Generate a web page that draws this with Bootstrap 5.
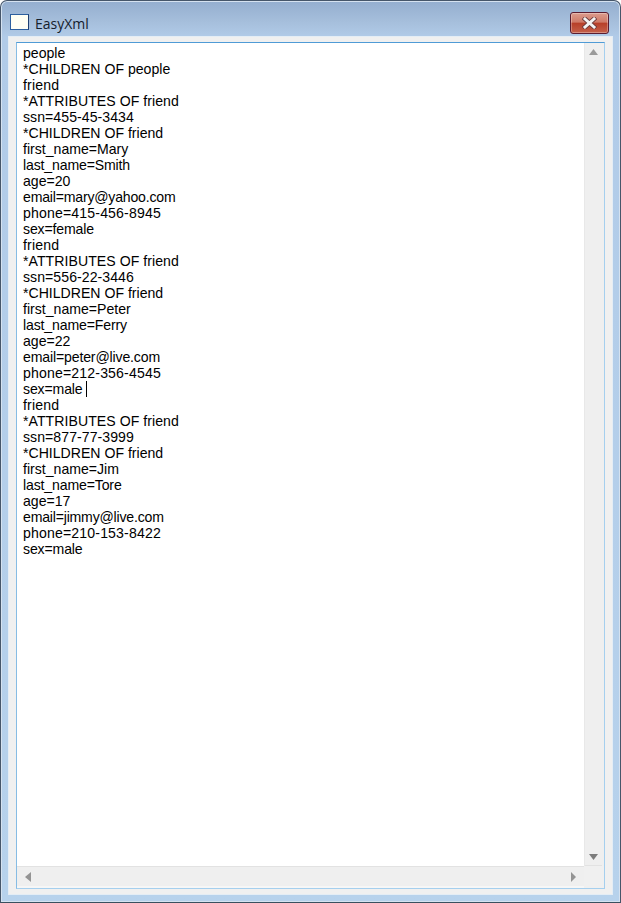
<!DOCTYPE html>
<html lang="en">
<head>
<meta charset="utf-8">
<title>EasyXml</title>
<link href="https://cdn.jsdelivr.net/npm/bootstrap@5.3.0/dist/css/bootstrap.min.css" rel="stylesheet">
<style>
html,body{margin:0;height:100%;background:#fff;}
.win-frame{width:621px;height:903px;border:1px solid #46566a;border-bottom-color:#39505f;border-radius:7px 7px 0 0;background:linear-gradient(180deg,#94aecf 0,#a5bedb 20px,#b1cbe8 36px,#b7d2ec 100%);padding:0 7px 7px 7px;box-shadow:inset 0 0 0 1px #d5e2f0;}
.win-title{height:35px;}
.win-icon{width:19px;height:16px;background:#fffff4;border:1px solid #2c5f9e;border-right-color:#1f3f70;margin-left:2px;margin-top:13px;}
.win-name{font:14px "Open Sans","Liberation Sans",sans-serif;color:#15202c;margin-left:6px;margin-top:13px;}
.win-close{width:39px;height:22px;margin-right:4px;margin-top:11px;border:1px solid #5a1c30;border-radius:3px;background:linear-gradient(180deg,#dc9c8e 0,#cf7a68 45%,#b8402a 52%,#c4604a 100%);box-shadow:inset 0 0 0 1px rgba(255,255,255,.3);}
.win-client{background:#f0f0f0;padding:5px 7px 5px 7px;border:1px solid #e4edf5;}
.edit-box{border:1px solid #a5cfee;border-top-color:#4f9bd6;border-left-color:#86bce4;background:#fff;height:847px;}
.edit-text{font:14.1px/16px "Liberation Sans",sans-serif;color:#000;padding:2px 0 0 6px;white-space:pre;}
.edit-caret{display:inline-block;width:1px;height:16px;background:#000;vertical-align:top;margin-left:3px;}
.sp-up{letter-spacing:.15px}
.sp-up2{letter-spacing:.05px}
.sp-dn{letter-spacing:-.15px}
.sp-dn2{letter-spacing:-.2px}
.scroll-v{width:20px;background:#efefef;border-left:1px solid #e8e8e8;}
.scroll-h{height:22px;background:#efefef;border-top:1px solid #e2e2e2;border-bottom:2px solid #f6f6f6;}
.scroll-btn{width:17px;height:18px;}
.btn-bot{border-bottom:1px solid #e2e2e2;}
.scroll-corner{width:20px;background:#f0f0f0;}
.arrow-shape{display:block;}
</style>
</head>
<body>
<div class="win-frame d-flex flex-column">
  <div class="win-title d-flex align-items-start flex-shrink-0">
    <div class="win-icon"></div>
    <div class="win-name flex-grow-1">EasyXml</div>
    <div class="win-close d-flex align-items-center justify-content-center">
      <svg width="15" height="12" viewBox="0 0 15 12" class="arrow-shape"><path d="M3 2 L12 10 M12 2 L3 10" stroke="#6b3a3a" stroke-width="4.6" stroke-linecap="square"/><path d="M3 2 L12 10 M12 2 L3 10" stroke="#f4f4f4" stroke-width="3" stroke-linecap="square"/></svg>
    </div>
  </div>
  <div class="win-client flex-grow-1">
    <div class="edit-box d-flex flex-column">
      <div class="d-flex flex-grow-1" style="min-height:0">
        <div class="edit-text flex-grow-1">people
*CHILDREN OF people
<span class="sp-up">friend</span>
<span class="sp-up2">*ATTRIBUTES OF friend</span>
<span class="sp-up2">ssn=455-45-3434</span>
*CHILDREN OF friend
first_name=Mary
<span class="sp-dn">last_name=Smith</span>
age=20
<span class="sp-dn2">email=mary@yahoo.com</span>
<span class="sp-up">phone=415-456-8945</span>
<span class="sp-dn">sex=female</span>
<span class="sp-up">friend</span>
<span class="sp-up2">*ATTRIBUTES OF friend</span>
<span class="sp-up2">ssn=556-22-3446</span>
*CHILDREN OF friend
first_name=Peter
<span class="sp-dn">last_name=Ferry</span>
age=22
<span class="sp-dn">email=peter@live.com</span>
<span class="sp-up">phone=212-356-4545</span>
<span class="sp-dn">sex=male</span><span class="edit-caret"></span>
<span class="sp-up">friend</span>
<span class="sp-up2">*ATTRIBUTES OF friend</span>
<span class="sp-up2">ssn=877-77-3999</span>
*CHILDREN OF friend
first_name=Jim
<span class="sp-dn">last_name=Tore</span>
age=17
<span class="sp-dn2">email=jimmy@live.com</span>
<span class="sp-up">phone=210-153-8422</span>
<span class="sp-dn">sex=male</span></div>
        <div class="scroll-v d-flex flex-column justify-content-between">
          <div class="scroll-btn d-flex align-items-center justify-content-center"><svg width="9" height="6" viewBox="0 0 9 6"><path d="M4.5 0 L9 6 H0 Z" fill="#9a9a9a"/></svg></div>
          <div class="scroll-btn btn-bot d-flex align-items-center justify-content-center"><svg width="9" height="6" viewBox="0 0 9 6"><path d="M0 0 H9 L4.5 6 Z" fill="#7c7c7c"/></svg></div>
        </div>
      </div>
      <div class="d-flex flex-shrink-0">
        <div class="scroll-h flex-grow-1 d-flex align-items-center justify-content-between px-2">
          <svg width="6" height="10" viewBox="0 0 6 10"><path d="M6 0 V10 L0 5 Z" fill="#949494"/></svg>
          <svg width="5" height="10" viewBox="0 0 5 10"><path d="M0 0 V10 L5 5 Z" fill="#949494"/></svg>
        </div>
        <div class="scroll-corner"></div>
      </div>
    </div>
  </div>
</div>
<script src="https://cdn.jsdelivr.net/npm/bootstrap@5.3.0/dist/js/bootstrap.bundle.min.js"></script>
</body>
</html>
